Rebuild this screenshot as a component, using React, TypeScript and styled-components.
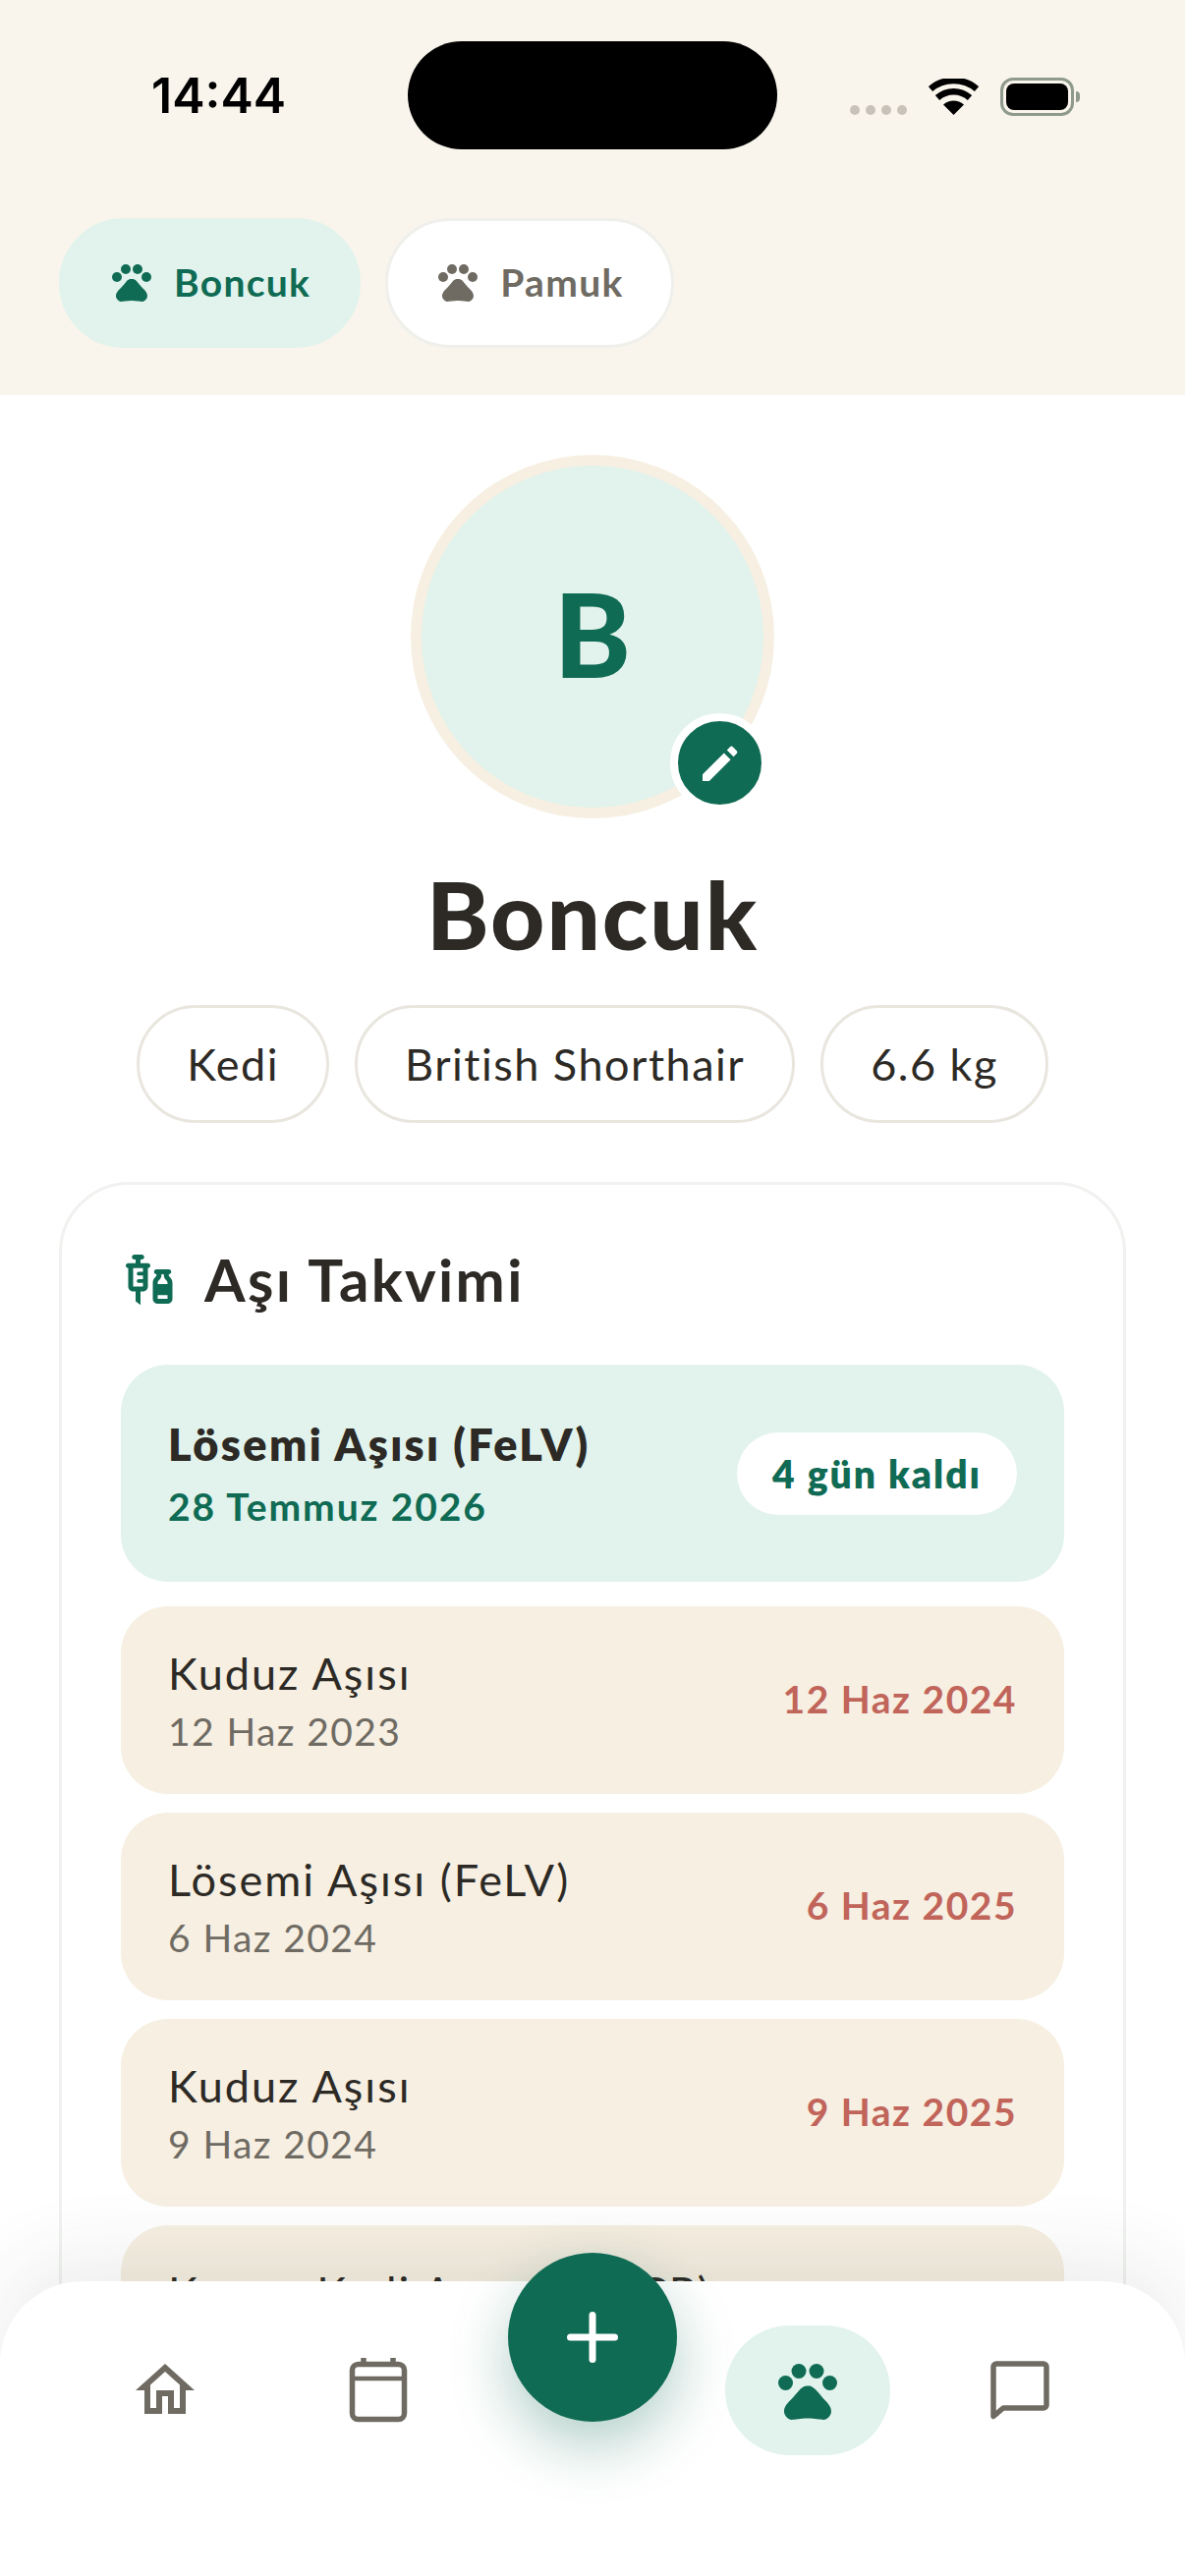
import React from "react";
import styled, { createGlobalStyle } from "styled-components";
import { MdPets, MdOutlineHome, MdVaccines } from "react-icons/md";

const FONT = `"Lato", "Noto Sans", sans-serif`;
const GREEN = "#106B54";
const MINT = "#E1F3EC";
const SAND = "#F6EFE2";
const INK = "#2D2A26";
const GRAY = "#6F6B63";
const RED = "#C1645A";

const Global = createGlobalStyle`
  html, body { margin: 0; padding: 0; background: #fff; }
  body { font-family: ${FONT}; color: ${INK}; }
  * { box-sizing: border-box; }
`;

const Screen = styled.div`
  position: relative;
  width: 1206px;
  height: 2622px;
  overflow: hidden;
  background: #fff;
`;

const Header = styled.header`
  background: #F9F5EC;
  height: 402px;
  padding-top: 42px;
`;

const StatusBar = styled.div`
  display: grid;
  grid-template-columns: 415px 376px 1fr;
  height: 110px;
`;

const Time = styled.div`
  padding-left: 154px;
  font: 600 50px/110px "Inter", sans-serif;
  color: #000;
`;

const Island = styled.div`
  background: #000;
  border-radius: 55px;
`;

const StatusRight = styled.div`
  display: flex;
  align-items: flex-end;
  padding: 0 0 35px 74px;
`;

const Dots = styled.div`
  display: flex;
  gap: 6px;
  margin-right: 22px;
`;

const Dot = styled.span`
  width: 10px;
  height: 10px;
  border-radius: 50%;
  background: #C9C2B8;
`;

const WifiIcon = styled.svg`
  display: block;
  width: 51px;
  height: 37px;
  margin-right: 22px;
`;

const Battery = styled.div`
  position: relative;
  width: 75px;
  height: 39px;
  margin-bottom: -1px;
  border: 3px solid #8F9A8C;
  border-radius: 13px;
  padding: 3px;
  &::before {
    content: "";
    display: block;
    height: 100%;
    background: #000;
    border-radius: 8px;
  }
  &::after {
    content: "";
    position: absolute;
    right: -9px;
    top: 11px;
    width: 4px;
    height: 11px;
    background: #8F9A8C;
    border-radius: 0 4px 4px 0;
  }
`;

const PetTabs = styled.div`
  display: flex;
  gap: 25px;
  margin-top: 70px;
  padding-left: 60px;
`;

const PetTab = styled.div<{ $active?: boolean }>`
  display: flex;
  align-items: center;
  gap: 19px;
  height: 132px;
  padding: 0 48px 2px 47px;
  border-radius: 66px;
  border: 3px solid ${(p) => (p.$active ? MINT : "#EFEFEB")};
  background: ${(p) => (p.$active ? MINT : "#fff")};
  color: ${(p) => (p.$active ? GREEN : GRAY)};
  font-size: 39px;
  font-weight: 700;
  letter-spacing: 1.3px;
  svg { width: 48px; height: 48px; flex: none; }
`;

const Main = styled.main`
  display: flex;
  flex-direction: column;
  align-items: center;
  padding-top: 61px;
`;

const AvatarWrap = styled.div`
  position: relative;
  width: 370px;
  height: 370px;
`;

const Avatar = styled.div`
  width: 100%;
  height: 100%;
  display: flex;
  align-items: center;
  justify-content: center;
  padding-bottom: 8px;
  border-radius: 50%;
  background: ${MINT};
  border: 11px solid ${SAND};
  color: ${GREEN};
  font-size: 118px;
  font-weight: 900;
`;

const EditBadge = styled.div`
  position: absolute;
  left: 264px;
  top: 263px;
  width: 101px;
  height: 101px;
  display: flex;
  align-items: center;
  justify-content: center;
  border-radius: 50%;
  background: ${GREEN};
  border: 8px solid #fff;
  svg { width: 48px; height: 48px; fill: #fff; }
`;

const PetName = styled.h1`
  margin: 32px 0 0;
  font-size: 96px;
  line-height: 130px;
  font-weight: 900;
  letter-spacing: 2px;
  color: ${INK};
`;

const Facts = styled.div`
  display: flex;
  gap: 26px;
  margin-top: 28px;
`;

const Fact = styled.div`
  display: flex;
  align-items: center;
  height: 120px;
  padding: 0 48px;
  border: 3px solid #E9E6DF;
  border-radius: 60px;
  font-size: 45px;
  letter-spacing: 1.5px;
  color: ${INK};
`;

const Card = styled.section`
  width: 1086px;
  margin-top: 60px;
  padding: 60px 60px 0;
  border: 3px solid #F0F2EF;
  border-radius: 72px;
  flex: none;
`;

const CardTitle = styled.h2`
  display: flex;
  align-items: center;
  gap: 25px;
  margin: 0 0 51px;
  height: 72px;
  font-size: 60px;
  font-weight: 700;
  letter-spacing: 2.3px;
  color: ${INK};
  svg { width: 60px; height: 60px; color: ${GREEN}; flex: none; }
`;

const Rows = styled.div`
  display: flex;
  flex-direction: column;
  gap: 19px;
`;

const NextRow = styled.div`
  display: flex;
  align-items: center;
  justify-content: space-between;
  height: 221px;
  margin-bottom: 6px;
  padding: 0 48px;
  border-radius: 48px;
  background: ${MINT};
`;

const NextName = styled.div`
  font-size: 45px;
  line-height: 60px;
  font-weight: 800;
  letter-spacing: 2.4px;
  color: ${INK};
`;

const NextDate = styled.div`
  margin-top: 6px;
  font-size: 39px;
  line-height: 54px;
  font-weight: 700;
  letter-spacing: 1.9px;
  color: ${GREEN};
`;

const DaysLeft = styled.div`
  display: flex;
  align-items: center;
  height: 84px;
  padding: 0 36px;
  border-radius: 42px;
  background: #fff;
  color: ${GREEN};
  font-size: 39px;
  font-weight: 800;
  letter-spacing: 2px;
`;

const PastRow = styled.div`
  display: flex;
  align-items: center;
  justify-content: space-between;
  height: 191px;
  flex: none;
  padding: 0 48px;
  border-radius: 48px;
  background: ${SAND};
`;

const PastName = styled.div`
  font-size: 45px;
  line-height: 60px;
  letter-spacing: 2px;
  color: ${INK};
`;

const PastDate = styled.div`
  margin-top: 2px;
  font-size: 39px;
  line-height: 54px;
  letter-spacing: 1.4px;
  color: ${GRAY};
`;

const DueDate = styled.div`
  margin-bottom: 3px;
  font-size: 39px;
  font-weight: 700;
  letter-spacing: 1.5px;
  color: ${RED};
`;

const BottomNav = styled.nav`
  position: absolute;
  left: 0;
  right: 0;
  bottom: 0;
  height: 300px;
  display: flex;
  align-items: flex-start;
  justify-content: space-between;
  padding: 45px 84px 0;
  background: #fff;
  border-radius: 84px 84px 0 0;
  box-shadow: 0 -24px 80px rgba(45, 55, 45, 0.09);
`;

const NavItem = styled.div<{ $active?: boolean }>`
  display: flex;
  align-items: center;
  justify-content: center;
  width: 168px;
  height: 132px;
  border-radius: 66px;
  background: ${(p) => (p.$active ? MINT : "transparent")};
  color: ${(p) => (p.$active ? GREEN : GRAY)};
  svg { display: block; width: 72px; height: 72px; }
`;

const Fab = styled.div`
  width: 172px;
  height: 172px;
  margin-top: -74px;
  display: flex;
  align-items: center;
  justify-content: center;
  border-radius: 50%;
  background: ${GREEN};
  box-shadow: 0 24px 60px rgba(16, 107, 84, 0.32);
  svg { width: 72px; height: 72px; }
`;

const past = [
  { name: "Kuduz Aşısı", done: "12 Haz 2023", due: "12 Haz 2024" },
  { name: "Lösemi Aşısı (FeLV)", done: "6 Haz 2024", due: "6 Haz 2025" },
  { name: "Kuduz Aşısı", done: "9 Haz 2024", due: "9 Haz 2025" },
  { name: "Karma Kedi Aşısı (FVRCP)", done: "9 Haz 2024", due: "9 Haz 2025" },
];

export default function App() {
  return (
    <Screen>
      <Global />
      <Header>
        <StatusBar>
          <Time>14:44</Time>
          <Island />
          <StatusRight>
            <Dots><Dot /><Dot /><Dot /><Dot /></Dots>
            <WifiIcon viewBox="0 0 51 37">
              <path d="M25.5 37 L15 26.5 C21 21 30 21 36 26.5 Z" fill="#000" />
              <path d="M9 19.5 C18.5 11 32.5 11 42 19.5" fill="none" stroke="#000" strokeWidth="6.5" />
              <path d="M2 10.5 C15 -1 36 -1 49 10.5" fill="none" stroke="#000" strokeWidth="6.5" />
            </WifiIcon>
            <Battery />
          </StatusRight>
        </StatusBar>
        <PetTabs>
          <PetTab $active><MdPets />Boncuk</PetTab>
          <PetTab><MdPets />Pamuk</PetTab>
        </PetTabs>
      </Header>
      <Main>
        <AvatarWrap>
          <Avatar>B</Avatar>
          <EditBadge>
            <svg viewBox="0 0 24 24">
              <path d="M3 17.6V21h3.4L17.3 10.1l-3.4-3.4L3 17.6z" />
              <path d="M15.4 5.2l1.6-1.6c.4-.4 1-.4 1.4 0l2 2c.4.4.4 1 0 1.4l-1.6 1.6z" />
            </svg>
          </EditBadge>
        </AvatarWrap>
        <PetName>Boncuk</PetName>
        <Facts>
          <Fact>Kedi</Fact>
          <Fact>British Shorthair</Fact>
          <Fact>6.6 kg</Fact>
        </Facts>
        <Card>
          <CardTitle><MdVaccines />Aşı Takvimi</CardTitle>
          <Rows>
            <NextRow>
              <div>
                <NextName>Lösemi Aşısı (FeLV)</NextName>
                <NextDate>28 Temmuz 2026</NextDate>
              </div>
              <DaysLeft>4 gün kaldı</DaysLeft>
            </NextRow>
            {past.map((r, i) => (
              <PastRow key={i}>
                <div>
                  <PastName>{r.name}</PastName>
                  <PastDate>{r.done}</PastDate>
                </div>
                <DueDate>{r.due}</DueDate>
              </PastRow>
            ))}
          </Rows>
        </Card>
      </Main>
      <BottomNav>
        <NavItem><MdOutlineHome /></NavItem>
        <NavItem>
          <svg viewBox="0 0 72 72" fill="none" stroke="currentColor">
            <rect x="9.5" y="9.5" width="53" height="56" rx="6" strokeWidth="5.5" />
            <path d="M9 24h54" strokeWidth="4.5" />
            <path d="M21 3v7M51 3v7" strokeWidth="5.5" />
          </svg>
        </NavItem>
        <Fab>
          <svg viewBox="0 0 72 72" fill="none" stroke="#fff" strokeWidth="7" strokeLinecap="round">
            <path d="M36 13.5v45M13.5 36h45" />
          </svg>
        </Fab>
        <NavItem $active><MdPets /></NavItem>
        <NavItem>
          <svg viewBox="0 0 72 72" fill="none" stroke="currentColor" strokeWidth="5.5" strokeLinejoin="round">
            <path d="M9 12a3 3 0 0 1 3-3h48a3 3 0 0 1 3 3v39a3 3 0 0 1-3 3H19L9 62.5z" />
          </svg>
        </NavItem>
      </BottomNav>
    </Screen>
  );
}
